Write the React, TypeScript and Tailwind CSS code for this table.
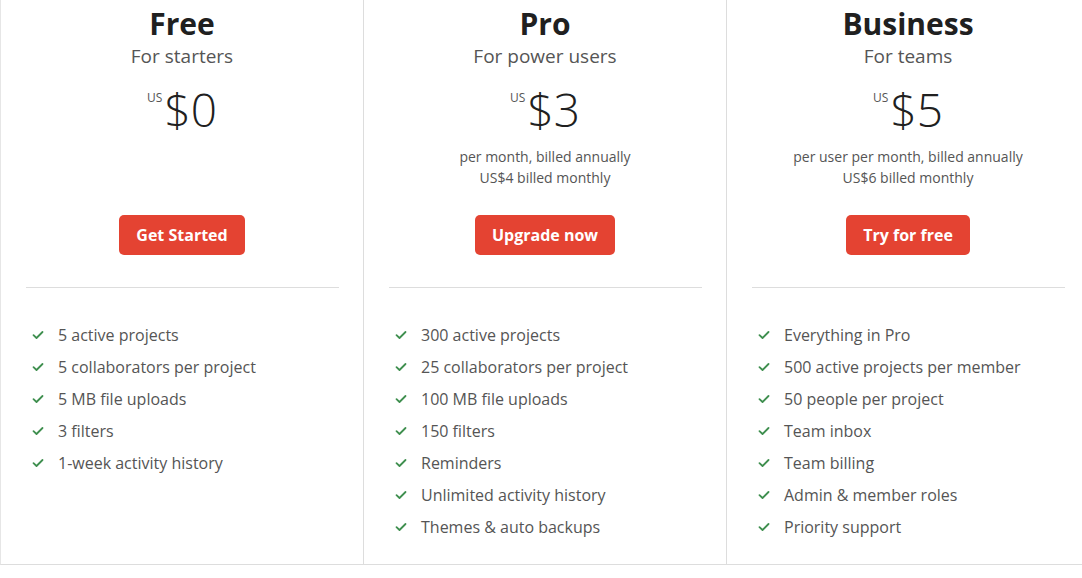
import React from "react";

type Plan = {
  name: string;
  sub: string;
  price: string;
  desc: string[];
  cta: string;
  features: string[];
};

const plans: Plan[] = [
  {
    name: "Free",
    sub: "For starters",
    price: "$0",
    desc: [],
    cta: "Get Started",
    features: [
      "5 active projects",
      "5 collaborators per project",
      "5 MB file uploads",
      "3 filters",
      "1-week activity history",
    ],
  },
  {
    name: "Pro",
    sub: "For power users",
    price: "$3",
    desc: ["per month, billed annually", "US$4 billed monthly"],
    cta: "Upgrade now",
    features: [
      "300 active projects",
      "25 collaborators per project",
      "100 MB file uploads",
      "150 filters",
      "Reminders",
      "Unlimited activity history",
      "Themes & auto backups",
    ],
  },
  {
    name: "Business",
    sub: "For teams",
    price: "$5",
    desc: ["per user per month, billed annually", "US$6 billed monthly"],
    cta: "Try for free",
    features: [
      "Everything in Pro",
      "500 active projects per member",
      "50 people per project",
      "Team inbox",
      "Team billing",
      "Admin & member roles",
      "Priority support",
    ],
  },
];

function Check() {
  return (
    <svg width="12" height="12" viewBox="0 0 12 12" className="shrink-0">
      <path d="M1.5 6.2 L4.5 9 L10.5 3" fill="none" stroke="#3f8f4f" strokeWidth="1.8" strokeLinecap="round" strokeLinejoin="round" />
    </svg>
  );
}

export default function App() {
  return (
    <div
      className="w-[1082px] h-[578px] overflow-hidden bg-white"
      style={{ fontFamily: "'Open Sans', 'Noto Sans', sans-serif" }}
    >
      <div className="flex w-[1089px] h-[565px] border-b border-[#dddddd] border-l border-l-[#e6e6e6]">
        {plans.map((p) => (
          <div key={p.name} className="w-[363px] shrink-0 border-r border-[#dddddd] flex flex-col">
            <div className="flex flex-col items-center pt-[6px]">
              <div className="text-[30px] leading-[36px] font-bold text-[#202020]">{p.name}</div>
              <div className="mt-[1px] text-[19px] leading-[26px] text-[#555555]">{p.sub}</div>
              <div className="mt-[14px] flex items-start h-[56px]">
                <span className="text-[12px] leading-[12px] text-[#555555] mt-[9px] mr-[2px]">US</span>
                <span className="text-[46px] leading-[52px] font-light text-[#202020]">{p.price}</span>
              </div>
              <div className="mt-[7px] h-[42px] flex flex-col items-center text-[14px] leading-[21px] text-[#555555]">
                {p.desc.map((d) => (
                  <div key={d}>{d}</div>
                ))}
              </div>
              <button className="mt-[27px] h-[40px] px-[17px] rounded-[5px] bg-[#e44332] text-white text-[16px] font-bold">
                {p.cta}
              </button>
            </div>
            <div className="mx-[25px] mr-[24px] mt-[32px] border-t border-[#dddddd]" />
            <ul className="pt-[31px] pl-[31px]">
              {p.features.map((f) => (
                <li key={f} className="flex items-center h-[32px] text-[16px] text-[#555555]">
                  <Check />
                  <span className="ml-[14px]">{f}</span>
                </li>
              ))}
            </ul>
          </div>
        ))}
      </div>
    </div>
  );
}
